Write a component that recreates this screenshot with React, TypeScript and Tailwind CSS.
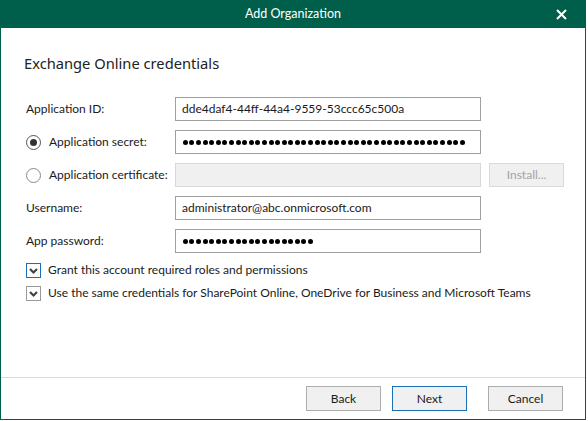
import React from 'react';

const Dots: React.FC<{ count: number }> = ({ count }) => (
    <div className="flex items-center">
        {Array.from({ length: count }).map((_, i) => (
            <span key={i} className="w-[6.6px] h-[6px] flex items-center justify-center shrink-0">
                <span className="w-[5px] h-[5px] rounded-full bg-black" />
            </span>
        ))}
    </div>
);

const Check: React.FC<{ focused?: boolean }> = ({ focused }) => (
    <span
        className={`w-[15px] h-[15px] border flex items-center justify-center bg-white shrink-0 ${
            focused ? 'border-[#1a6fb5]' : 'border-[#9a9a9a]'
        }`}
    >
        <svg width="11" height="11" viewBox="0 0 11 11">
            <polyline points="2,4 5.5,7.5 9,4" fill="none" stroke="#444" strokeWidth="2.2" />
        </svg>
    </span>
);

const Radio: React.FC<{ checked?: boolean }> = ({ checked }) => (
    <span
        className={`w-[15px] h-[15px] rounded-full border flex items-center justify-center bg-white shrink-0 ${
            checked ? 'border-[#555]' : 'border-[#8a8a8a]'
        }`}
    >
        {checked && <span className="w-[7px] h-[7px] rounded-full bg-[#333]" />}
    </span>
);

const App: React.FC = () => {
    return (
        <div
            className="w-[586px] h-[420px] flex flex-col bg-white border-x border-b border-[#005f4b] text-[#1a1a1a] text-[12px]"
            style={{ fontFamily: 'Lato, "Noto Sans", sans-serif' }}
        >
            {/* Title bar */}
            <div className="h-[28px] -mx-px bg-[#005f4b] flex items-center justify-center relative shrink-0">
                <span className="text-white text-[12.5px]">Add Organization</span>
                <svg className="absolute right-[19px] top-[9px]" width="11" height="11" viewBox="0 0 11 11">
                    <path d="M1 1 L10 10 M10 1 L1 10" stroke="white" strokeWidth="2" />
                </svg>
            </div>

            <div className="flex-1 flex flex-col pl-[23px] pt-[25px]">
                <h1
                    className="text-[14.7px] leading-[20px] text-[#222]"
                    style={{ fontFamily: '"Noto Sans", sans-serif' }}
                >
                    Exchange Online credentials
                </h1>

                {/* Form */}
                <div className="mt-[24px] flex flex-col gap-[9px]">
                    <div className="flex items-center h-[24px]">
                        <span className="w-[151px] pl-[2px]">Application ID:</span>
                        <div className="w-[306px] h-[24px] border border-[#a0a0a0] flex items-center px-[6px]">
                            dde4daf4-44ff-44a4-9559-53ccc65c500a
                        </div>
                    </div>
                    <div className="flex items-center h-[24px]">
                        <div className="w-[151px] flex items-center gap-[8px] pl-[2px]">
                            <Radio checked />
                            <span>Application secret:</span>
                        </div>
                        <div className="w-[306px] h-[24px] border border-[#a0a0a0] flex items-center px-[6px]">
                            <Dots count={43} />
                        </div>
                    </div>
                    <div className="flex items-center h-[24px]">
                        <div className="w-[151px] flex items-center gap-[8px] pl-[2px]">
                            <Radio />
                            <span>Application certificate:</span>
                        </div>
                        <div className="w-[306px] h-[24px] border border-[#d9d9d9] bg-[#f0f0f0]" />
                        <button className="ml-[8px] w-[75px] h-[24px] border border-[#dadada] bg-[#f0f0f0] text-[#a3a3a3]">
                            Install...
                        </button>
                    </div>
                    <div className="flex items-center h-[24px]">
                        <span className="w-[151px] pl-[2px]">Username:</span>
                        <div className="w-[306px] h-[24px] border border-[#a0a0a0] flex items-center px-[6px]">
                            administrator@abc.onmicrosoft.com
                        </div>
                    </div>
                    <div className="flex items-center h-[24px]">
                        <span className="w-[151px] pl-[2px]">App password:</span>
                        <div className="w-[306px] h-[24px] border border-[#a0a0a0] flex items-center px-[6px]">
                            <Dots count={20} />
                        </div>
                    </div>
                </div>

                {/* Checkboxes */}
                <div className="mt-[7px] flex flex-col gap-[3px] pl-[2px]">
                    <label className="flex items-center gap-[7px] h-[20px]">
                        <Check focused />
                        <span>Grant this account required roles and permissions</span>
                    </label>
                    <label className="flex items-center gap-[7px] h-[20px]">
                        <Check />
                        <span>Use the same credentials for SharePoint Online, OneDrive for Business and Microsoft Teams</span>
                    </label>
                </div>
            </div>

            {/* Footer */}
            <div className="h-[42px] border-t border-[#d9d9d9] flex justify-end items-start pt-[8px] pr-[22px] shrink-0">
                <button className="w-[75px] h-[25px] border border-[#adadad] bg-[#f0f0f0]">Back</button>
                <button className="ml-[11px] w-[75px] h-[25px] border border-[#1a6fb5] bg-[#f0f0f0]">Next</button>
                <button className="ml-[21px] w-[75px] h-[25px] border border-[#adadad] bg-[#f0f0f0]">Cancel</button>
            </div>
        </div>
    );
};

export default App;
